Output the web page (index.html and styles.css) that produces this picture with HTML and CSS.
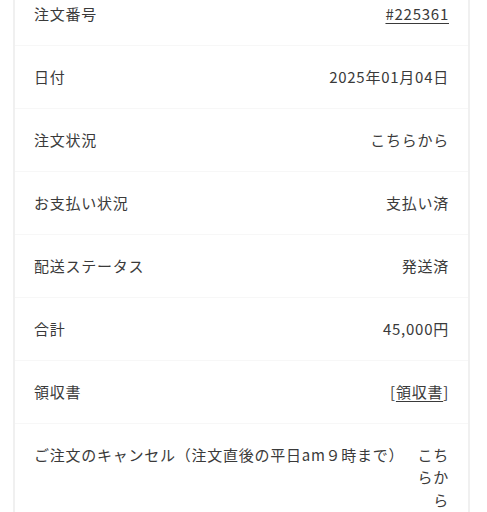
FILE: index.html
```html
<!DOCTYPE html>
<html lang="ja">
<head>
<meta charset="utf-8">
<link rel="stylesheet" href="styles.css">
</head>
<body>
<div class="card">
  <div class="row"><div class="label">注文番号</div><div class="value"><a class="link" href="#">#225361</a></div></div>
  <div class="row"><div class="label">日付</div><div class="value">2025年01月04日</div></div>
  <div class="row"><div class="label">注文状況</div><div class="value">こちらから</div></div>
  <div class="row"><div class="label">お支払い状況</div><div class="value">支払い済</div></div>
  <div class="row"><div class="label">配送ステータス</div><div class="value">発送済</div></div>
  <div class="row"><div class="label">合計</div><div class="value">45,000円</div></div>
  <div class="row"><div class="label">領収書</div><div class="value">[<a class="link" href="#">領収書</a>]</div></div>
  <div class="row last"><div class="label">ご注文のキャンセル（注文直後の平日am９時まで）</div><div class="value">こちらから</div></div>
</div>
</body>
</html>
```

FILE: styles.css
```css
html, body {
  margin: 0;
  padding: 0;
  background: #ffffff;
}
body {
  font-family: "Noto Sans CJK JP", "Noto Sans", sans-serif;
  font-size: 15px;
  line-height: 22.5px;
  color: #3a3a3a;
  letter-spacing: 0.75px;
}
.card {
  margin: -17px 17px 0 13px;
  border-left: 2px solid #f0f0f0;
  border-right: 2px solid #f0f0f0;
  background: #fff;
}
.row {
  display: flex;
  justify-content: space-between;
  align-items: flex-start;
  gap: 6px;
  padding: 19.75px 19px 19.75px 19px;
  border-bottom: 1px solid #f7f7f7;
}
.label {
  flex: none;
}
.value {
  flex: 1 1 auto;
  min-width: 0;
  text-align: right;
}
.link {
  color: #3a3a3a;
  text-decoration: underline;
  text-underline-offset: 3px;
}
```
